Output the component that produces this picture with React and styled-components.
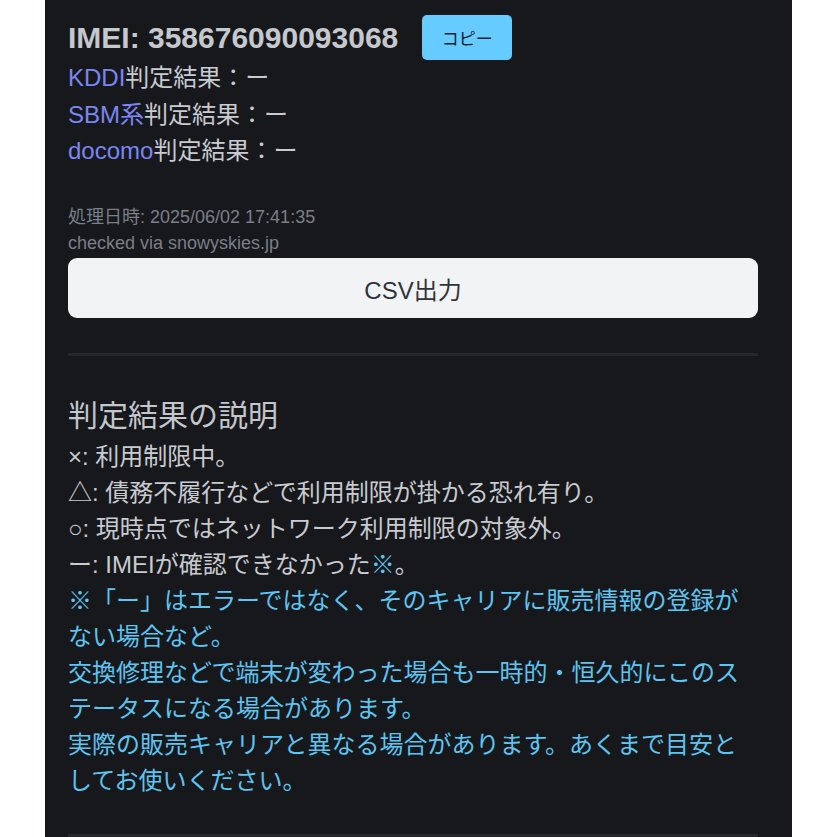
import React from "react";
import styled, { createGlobalStyle } from "styled-components";

const GlobalStyle = createGlobalStyle`
  html, body {
    margin: 0;
    padding: 0;
    background: #ffffff;
  }
  body {
    font-family: "Liberation Sans", "Noto Sans CJK JP", sans-serif;
  }
`;

const Page = styled.div`
  display: flex;
  justify-content: flex-start;
  padding-left: 45px;
`;

const Panel = styled.main`
  width: 747px;
  min-height: 837px;
  box-sizing: border-box;
  background-color: #17181c;
  padding: 15px 34px 0 23px;
  color: #c8cbd0;
`;

const ImeiRow = styled.div`
  display: flex;
  align-items: center;
  gap: 24px;
  height: 45px;
`;

const Imei = styled.h1`
  margin: 0;
  font-size: 30px;
  font-weight: 700;
  color: #c5c8cd;
  line-height: 1;
`;

const CopyButton = styled.button`
  width: 90px;
  height: 45px;
  border: none;
  border-radius: 5px;
  background-color: #66ccff;
  color: #14202e;
  font-family: "Noto Sans CJK JP", sans-serif;
  font-size: 17px;
  padding: 0;
`;

const ResultLine = styled.div`
  font-size: 24px;
  line-height: 36.5px;
  color: #c8cbd0;
`;

const Carrier = styled.span`
  color: #7b86f2;
`;

const Meta = styled.div`
  margin-top: 34px;
  font-size: 18px;
  line-height: 26.5px;
  color: #7b7f88;
`;

const CsvButton = styled.button`
  display: block;
  width: 100%;
  height: 60px;
  margin-top: 1.5px;
  border: none;
  border-radius: 9px;
  background-color: #f2f3f5;
  color: #30333a;
  font-family: "Liberation Sans", "Noto Sans CJK JP", sans-serif;
  font-size: 24px;
`;

const Divider = styled.hr`
  margin: 35px 0 0;
  border: none;
  height: 3px;
  background-color: #26272c;
`;

const Section = styled.section`
  padding-top: 40px;
`;

const SectionTitle = styled.h2`
  margin: 0 0 3px;
  font-size: 30px;
  font-weight: 400;
  line-height: 40px;
  color: #c3c6cb;
`;

const Explain = styled.div`
  font-size: 24px;
  line-height: 36px;
  color: ${(p) => (p.$note ? "#5ec4f0" : "#c8cbd0")};
`;

const Mark = styled.span`
  color: #5ec4f0;
`;

const results = [
  { carrier: "KDDI" },
  { carrier: "SBM系" },
  { carrier: "docomo" },
];

export default function App() {
  return (
    <>
      <GlobalStyle />
      <Page>
        <Panel>
          <ImeiRow>
            <Imei>IMEI: 358676090093068</Imei>
            <CopyButton>コピー</CopyButton>
          </ImeiRow>
          <div>
            {results.map((r) => (
              <ResultLine key={r.carrier}>
                <Carrier>{r.carrier}</Carrier>判定結果：ー
              </ResultLine>
            ))}
          </div>
          <Meta>
            <div>処理日時: 2025/06/02 17:41:35</div>
            <div>checked via snowyskies.jp</div>
          </Meta>
          <CsvButton>CSV出力</CsvButton>
          <Divider />
          <Section>
            <SectionTitle>判定結果の説明</SectionTitle>
            <Explain>×: 利用制限中。</Explain>
            <Explain>△: 債務不履行などで利用制限が掛かる恐れ有り。</Explain>
            <Explain>○: 現時点ではネットワーク利用制限の対象外。</Explain>
            <Explain>
              ー: IMEIが確認できなかった<Mark>※</Mark>。
            </Explain>
            <Explain $note>
              ※「ー」はエラーではなく、そのキャリアに販売情報の登録がない場合など。
            </Explain>
            <Explain $note>
              交換修理などで端末が変わった場合も一時的・恒久的にこのステータスになる場合があります。
            </Explain>
            <Explain $note>
              実際の販売キャリアと異なる場合があります。あくまで目安としてお使いください。
            </Explain>
          </Section>
          <Divider />
        </Panel>
      </Page>
    </>
  );
}
